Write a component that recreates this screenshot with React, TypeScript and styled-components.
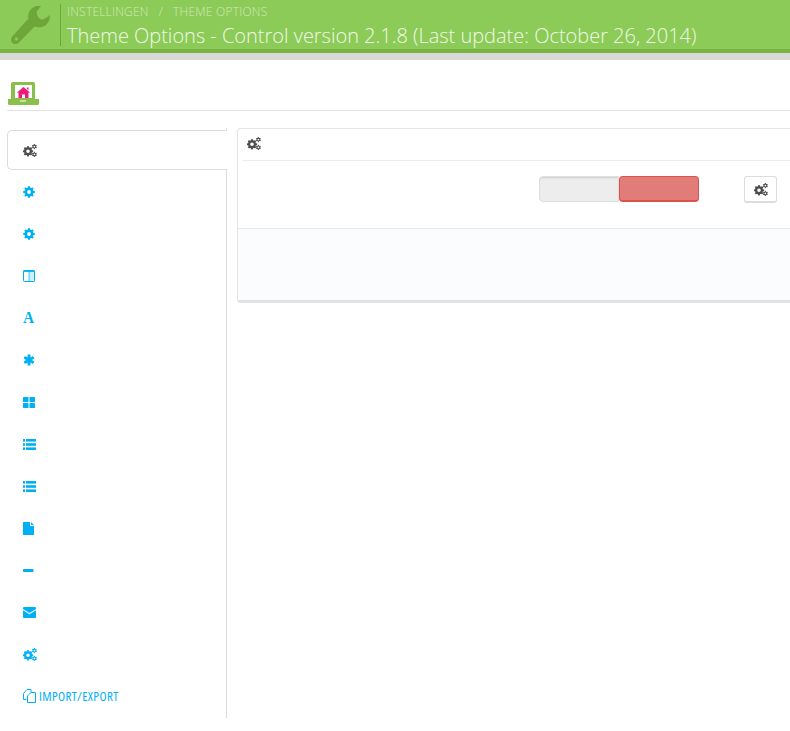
import React from "react";
import styled, { createGlobalStyle } from "styled-components";

const Global = createGlobalStyle`
  html, body { margin: 0; padding: 0; background: #fff; overflow: hidden; }
  * { box-sizing: border-box; }
`;

const Page = styled.div`
  width: 790px;
  height: 731px;
  overflow: hidden;
  font-family: "Open Sans", "Liberation Sans", sans-serif;
`;

const Header = styled.header`
  height: 60px;
  background: #8ccb57;
  border-bottom: 7px solid #d8d8d8;
  display: flex;
  position: relative;
  padding: 4px 0 0 11px;
  &::after {
    content: "";
    position: absolute;
    left: 0;
    right: 0;
    top: 49px;
    height: 4px;
    background: #78b33f;
  }
`;

const WrenchBox = styled.div`
  width: 50px;
  height: 42px;
  padding-top: 2px;
  border-right: 1px solid #6fa63c;
  flex: none;
`;

const HeaderText = styled.div`
  margin-left: 6px;
  display: flex;
  flex-direction: column;
`;

const Crumbs = styled.div`
  font-size: 12px;
  line-height: 15px;
  letter-spacing: 0.22px;
  color: #d2e9bc;
  font-weight: 300;
  display: flex;
  gap: 10px;
`;

const Title = styled.h1`
  margin: 4px 0 0;
  font-size: 20px;
  line-height: 26px;
  font-weight: 300;
  letter-spacing: -0.015px;
  color: #f0f9e7;
  white-space: nowrap;
`;

const PageBar = styled.div`
  margin-left: 7px;
  height: 51px;
  border-bottom: 1px solid #e2e2e2;
  padding: 22px 0 0 1px;
`;

const Content = styled.div`
  display: flex;
  align-items: flex-start;
  padding: 17px 0 0 7px;
`;

const Side = styled.nav`
  width: 220px;
  height: 590px;
  flex: none;
  padding-top: 2px;
  border-right: 1px solid #dcdcdc;
`;

const Tab = styled.div<{ $active?: boolean }>`
  height: ${(p) => (p.$active ? "40px" : "42px")};
  display: flex;
  align-items: center;
  gap: 3px;
  padding-left: 16px;
  color: ${(p) => (p.$active ? "#4d4d4d" : "#00b0f3")};
  ${(p) =>
    p.$active
      ? `
    width: 220px;
    background: #fff;
    border: 1px solid #dcdcdc;
    border-right: none;
    border-radius: 5px 0 0 5px;
    margin-bottom: 1px;
    padding-left: 15px;
  `
      : ""}
`;

const TabLabel = styled.span`
  font-stretch: condensed;
  font-size: 13px;
  font-weight: 400;
  letter-spacing: 0.4px;
  color: #00b0f3;
  white-space: nowrap;
`;

const SerifGlyph = styled.span`
  font-family: "Liberation Serif", serif;
  font-weight: 700;
  font-size: 17px;
  line-height: 14px;
  width: 13px;
  transform: scaleX(0.9);
  transform-origin: left center;
`;

const Panel = styled.section`
  margin-left: 10px;
  flex: 1;
  height: 175px;
  border: 1px solid #e4e4e4;
  border-right: none;
  border-bottom: 3px solid #e2e2e2;
  border-radius: 4px 0 0 4px;
  background: #fff;
  display: flex;
  flex-direction: column;
`;

const PanelHead = styled.div`
  height: 32px;
  margin-left: 4px;
  border-bottom: 1px solid #ececec;
  display: flex;
  align-items: center;
  padding: 0 0 2px 5px;
  color: #4d4d4d;
`;

const PanelBody = styled.div`
  height: 68px;
  border-bottom: 1px solid #e9e9e9;
  display: flex;
  align-items: flex-start;
  padding: 15px 12px 0 301px;
`;

const Switch = styled.div`
  display: flex;
  width: 160px;
  height: 26px;
`;

const SwitchOff = styled.div`
  width: 80px;
  background: #ededed;
  border: 1px solid #dedede;
  border-radius: 4px 0 0 4px;
  box-shadow: inset 0 2px 2px -1px #cfcfcf;
`;

const SwitchOn = styled.div`
  width: 80px;
  background: #e27c79;
  border: 1px solid #d9534f;
  border-bottom-width: 2px;
  border-radius: 4px;
`;

const CogButton = styled.button`
  margin-left: 45px;
  width: 33px;
  height: 27px;
  padding: 0;
  background: #fff;
  border: 1px solid #dcdcdc;
  border-bottom-width: 2px;
  border-radius: 3px;
  color: #4d4d4d;
  display: flex;
  align-items: center;
  justify-content: center;
`;

const PanelFoot = styled.div`
  flex: 1;
  background: #fbfcfe;
`;

const Gear = ({ cx, cy, r, hole, teeth = 8 }: { cx: number; cy: number; r: number; hole: number; teeth?: number }) => {
  const t = Array.from({ length: teeth }, (_, i) => (i * 360) / teeth);
  return (
    <g>
      {t.map((a) => (
        <rect
          key={a}
          x={cx - r * 0.24}
          y={cy - r * 1.28}
          width={r * 0.48}
          height={r * 0.6}
          fill="currentColor"
          transform={`rotate(${a} ${cx} ${cy})`}
        />
      ))}
      <circle cx={cx} cy={cy} r={(r + hole) / 2} fill="none" stroke="currentColor" strokeWidth={r - hole} />
    </g>
  );
};

const CogsIcon = () => (
  <svg width="14" height="13" viewBox="0 0 14 13">
    <Gear cx={5} cy={7.3} r={4} hole={1.8} />
    <Gear cx={11.400} cy={2.600} r={2} hole={0.900} teeth={6} />
    <Gear cx={11.400} cy={10.400} r={2} hole={0.900} teeth={6} />
  </svg>
);

const CogIcon = () => (
  <svg width="12" height="12" viewBox="0 0 12 12">
    <Gear cx={6} cy={6} r={4.500} hole={1.900} />
  </svg>
);

const ColumnsIcon = () => (
  <svg width="12" height="12" viewBox="0 0 12 12">
    <rect x="0.500" y="0.500" width="11" height="11" rx="0.800" fill="none" stroke="currentColor" />
    <rect x="0.500" y="0.500" width="11" height="1.400" fill="currentColor" />
    <rect x="5.600" y="2" width="1" height="9" fill="currentColor" opacity="0.8" />
    <rect x="6.600" y="2" width="4.400" height="9" fill="currentColor" opacity="0.2" />
  </svg>
);

const AsteriskIcon = () => (
  <svg width="12" height="12" viewBox="0 0 12 12">
    <g fill="currentColor">
      <rect x="4.500" y="0.500" width="3" height="11" rx="0.600" />
      <rect x="4.500" y="0.500" width="3" height="11" rx="0.600" transform="rotate(60 6 6)" />
      <rect x="4.500" y="0.500" width="3" height="11" rx="0.600" transform="rotate(120 6 6)" />
    </g>
  </svg>
);

const GridIcon = () => (
  <svg width="12" height="11" viewBox="0 0 12 11">
    <g fill="currentColor">
      <rect x="0" y="0" width="5.500" height="5" rx="0.600" />
      <rect x="6.500" y="0" width="5.500" height="5" rx="0.600" />
      <rect x="0" y="6" width="5.500" height="5" rx="0.600" />
      <rect x="6.500" y="6" width="5.500" height="5" rx="0.600" />
    </g>
  </svg>
);

const ListIcon = () => (
  <svg width="13" height="11" viewBox="0 0 13 11">
    <g fill="currentColor">
      {[0, 4.200, 8.400].map((y) => (
        <g key={y}>
          <rect x="0" y={y} width="2" height="2.600" />
          <rect x="3" y={y} width="10" height="2.600" />
        </g>
      ))}
    </g>
  </svg>
);

const FileIcon = () => (
  <svg width="11" height="13" viewBox="0 0 11 13">
    <path d="M0 .5A.5.5 0 0 1 .5 0H7v3.500A.5.5 0 0 0 7.500 4H11v8.500a.5.5 0 0 1-.5.5H.5a.5.5 0 0 1-.5-.5zM8 0l3 3H8z" fill="currentColor" />
  </svg>
);

const MinusIcon = () => (
  <svg width="11" height="3" viewBox="0 0 11 3">
    <rect width="10.500" height="3" rx="0.800" fill="currentColor" />
  </svg>
);

const MailIcon = () => (
  <svg width="13" height="11" viewBox="0 0 13 11">
    <path d="M1 0h11a1 1 0 0 1 1 1v.9L6.500 6 0 1.900V1a1 1 0 0 1 1-1zM0 3.200l6.500 4.100L13 3.200V10a1 1 0 0 1-1 1H1a1 1 0 0 1-1-1z" fill="currentColor" />
  </svg>
);

const CopyIcon = () => (
  <svg width="13" height="14" viewBox="0 0 13 14" fill="none" stroke="currentColor" strokeWidth="1">
    <path d="M3.500 10.500H.5V4.500l3.500-4h4v3" />
    <path d="M4.500 7l3.500-3.500h4.500v10h-8z" fill="#fff" />
  </svg>
);

const Wrench = () => (
  <svg width="39" height="38" viewBox="0 0 39 38" style={{ display: "block" }}>
    <g fill="#6ea63a">
      <path d="M17 13L24 20L8 36.500C6 38.500 3 38.500 1.300 36.700C-.4 35 -.4 32 1.500 30.200Z" />
      <circle cx="28" cy="10.500" r="10.800" />
    </g>
    <path d="M31 -1L26 5Q25 9 28 12L30 13.500Q34 14 39.500 8V-1Z" fill="#8ccb57" />
    <circle cx="5.500" cy="33" r="1.600" fill="#8ccb57" />
  </svg>
);

const HomeLaptop = () => (
  <svg width="31" height="23" viewBox="0 0 31 23" style={{ display: "block" }}>
    <rect x="3" y="0" width="24" height="18" rx="1.500" fill="#8bbf4b" />
    <rect x="7" y="3" width="17" height="13" fill="#fff" />
    <path d="M0 17h31v4.500a1.500 1.500 0 0 1-1.500 1.500h-28A1.500 1.500 0 0 1 0 21.500z" fill="#8bbf4b" />
    <rect x="12" y="18.500" width="6" height="1" fill="#fff" />
    <path d="M15.500 5L22 10.500h-1.500V16h-3.500v-3.500h-3V16h-3.500v-5.500H9zM19 5.500h1.500v2.700L19 7z" fill="#ec1c7c" />
  </svg>
);

const icons = [
  <CogIcon />,
  <CogIcon />,
  <ColumnsIcon />,
  <SerifGlyph>A</SerifGlyph>,
  <AsteriskIcon />,
  <GridIcon />,
  <ListIcon />,
  <ListIcon />,
  <FileIcon />,
  <MinusIcon />,
  <MailIcon />,
  <CogsIcon />,
];

export default function App() {
  return (
    <Page>
      <Global />
      <Header>
        <WrenchBox>
          <Wrench />
        </WrenchBox>
        <HeaderText>
          <Crumbs>
            <span>INSTELLINGEN</span>
            <span>/</span>
            <span>THEME OPTIONS</span>
          </Crumbs>
          <Title>Theme Options - Control version 2.1.8 (Last update: October 26, 2014)</Title>
        </HeaderText>
      </Header>
      <PageBar>
        <HomeLaptop />
      </PageBar>
      <Content>
        <Side>
          <Tab $active>
            <CogsIcon />
          </Tab>
          {icons.map((icon, i) => (
            <Tab key={i}>{icon}</Tab>
          ))}
          <Tab>
            <CopyIcon />
            <TabLabel>IMPORT/EXPORT</TabLabel>
          </Tab>
        </Side>
        <Panel>
          <PanelHead>
            <CogsIcon />
          </PanelHead>
          <PanelBody>
            <Switch>
              <SwitchOff />
              <SwitchOn />
            </Switch>
            <CogButton>
              <CogsIcon />
            </CogButton>
          </PanelBody>
          <PanelFoot />
        </Panel>
      </Content>
    </Page>
  );
}
